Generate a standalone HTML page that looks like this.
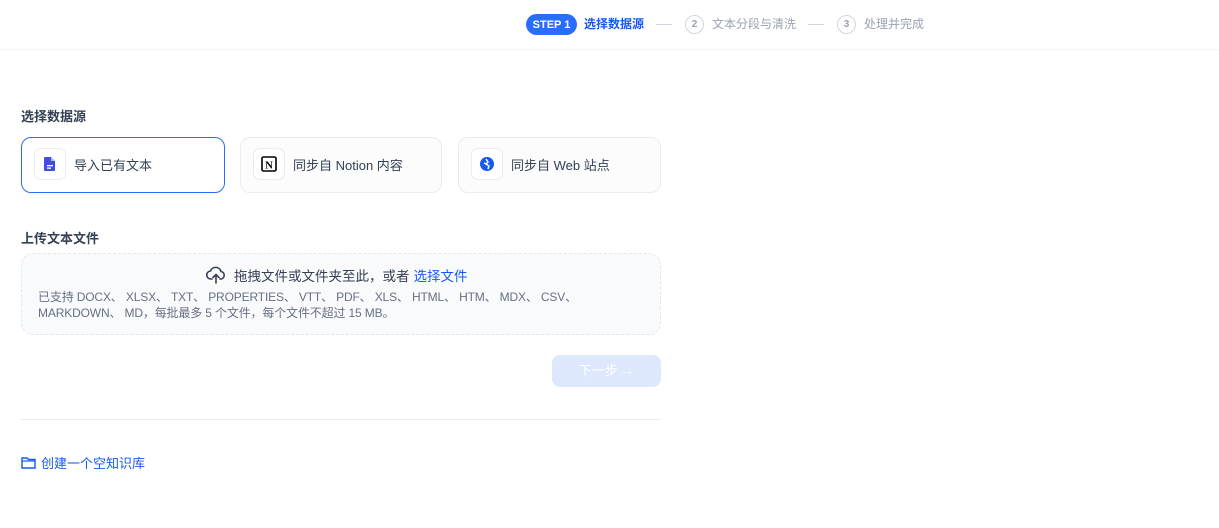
<!DOCTYPE html>
<html><head><meta charset="utf-8"><style>
*{box-sizing:border-box;margin:0;padding:0}
body{width:1219px;height:528px;background:#fff;font-family:"Liberation Sans","Noto Sans CJK SC",sans-serif;position:relative;overflow:hidden;color:#1d2939}
.hdr{position:absolute;left:0;top:0;width:1219px;height:50px;border-bottom:1px solid #f2f4f7}
.abs{position:absolute}
.pill{left:526px;top:14px;width:51px;height:21px;border-radius:11px;background:#296dff;color:#fff;font-size:11px;font-weight:bold;display:flex;align-items:center;justify-content:center}
.circ{width:19px;height:19px;border:1px solid #d0d5dd;border-radius:50%;color:#98a2b3;font-size:10px;font-weight:bold;display:flex;align-items:center;justify-content:center}
.line{height:1px;width:16px;background:#d0d5dd}
.st{font-size:12px;color:#98a2b3;line-height:20px}
.h{font-size:13px;font-weight:bold;color:#344054}
.card{top:137px;height:56px;border:1px solid #eaecf0;border-radius:10px;background:#fcfcfd;display:flex;align-items:center;padding-left:12px;font-size:13px;color:#344054;padding-bottom:2px}
.card.a{border:1.5px solid #296dff;background:#fff}
.ic{width:32px;height:32px;border:1px solid #eaecf0;border-radius:7px;background:#fff;margin-right:8px;display:flex;align-items:center;justify-content:center}
</style></head><body>
<div class="hdr"></div>
<div class="abs pill">STEP 1</div>
<div class="abs st" style="left:584px;top:14px;color:#155aef;font-weight:bold">选择数据源</div>
<div class="abs line" style="left:656px;top:24px"></div>
<div class="abs circ" style="left:685px;top:15px">2</div>
<div class="abs st" style="left:712px;top:14px">文本分段与清洗</div>
<div class="abs line" style="left:808px;top:24px"></div>
<div class="abs circ" style="left:837px;top:15px">3</div>
<div class="abs st" style="left:864px;top:14px">处理并完成</div>

<div class="abs h" style="left:21px;top:106px">选择数据源</div>
<div class="abs card a" style="left:21px;width:204px"><div class="ic"><svg width="14" height="16" viewBox="0 0 14 16"><path d="M2 1h6l4 4v9a1 1 0 0 1-1 1H2a1 1 0 0 1-1-1V2a1 1 0 0 1 1-1z" fill="#444ce7"/><path d="M8 1v4h4" fill="#a4bcfd"/><rect x="4" y="9" width="6" height="1.3" fill="#fff"/><rect x="4" y="11.5" width="4" height="1.3" fill="#fff"/></svg></div>导入已有文本</div>
<div class="abs card" style="left:240px;width:202px"><div class="ic"><svg width="18" height="18" viewBox="0 0 18 18"><rect x="2" y="2" width="14" height="14" rx="1.5" fill="#fff" stroke="#000" stroke-width="1.6"/><text x="9" y="13.5" font-size="11" font-family="Liberation Serif" font-weight="bold" text-anchor="middle">N</text></svg></div>同步自 Notion 内容</div>
<div class="abs card" style="left:458px;width:203px"><div class="ic"><svg width="16" height="16" viewBox="0 0 16 16"><circle cx="8" cy="8" r="7" fill="#155aef"/><path d="M7 3l2 3-2 2 3 2-1 3M5 7l2 1" stroke="#fff" stroke-width="1.5" fill="none"/></svg></div>同步自 Web 站点</div>

<div class="abs h" style="left:21px;top:228px">上传文本文件</div>
<div class="abs" style="left:21px;top:253px;width:640px;height:82px;border:1px dashed #e4e7ec;border-radius:12px;background:#f9fafb"></div>
<div class="abs" style="left:206px;top:265px;font-size:13.5px;color:#344054;display:flex;align-items:center"><svg width="20" height="18" viewBox="0 0 20 18" style="margin-right:8px"><path d="M6 13H5a4 4 0 0 1-.5-8A5.5 5.5 0 0 1 15 5.5a3.8 3.8 0 0 1 0 7.5h-1" fill="none" stroke="#344054" stroke-width="1.6" stroke-linecap="round"/><path d="M10 17V9M7 11.5l3-3 3 3" fill="none" stroke="#344054" stroke-width="1.6" stroke-linecap="round"/></svg>拖拽文件或文件夹至此，或者 <span style="color:#155aef;margin-left:4px">选择文件</span></div>
<div class="abs" style="left:38px;top:289px;width:610px;font-size:12px;color:#667085;line-height:16px;letter-spacing:-0.15px">已支持 DOCX、 XLSX、 TXT、 PROPERTIES、 VTT、 PDF、 XLS、 HTML、 HTM、 MDX、 CSV、<br>MARKDOWN、 MD，每批最多 5 个文件，每个文件不超过 15 MB。</div>

<div class="abs" style="left:552px;top:355px;width:109px;height:32px;border-radius:8px;background:#dde8fd;color:#fff;font-size:13px;text-align:center;line-height:32px">下一步 →</div>
<div class="abs" style="left:21px;top:419px;width:640px;height:1px;background:#eaecf0"></div>
<div class="abs" style="left:21px;top:453px;font-size:13px;color:#155aef;display:flex;align-items:center"><svg width="15" height="13" viewBox="0 0 15 13" style="margin-right:5px"><path d="M1 2h5l1.5 1.5H14V12H1z" fill="none" stroke="#155aef" stroke-width="1.4"/><path d="M1 5h13" stroke="#155aef" stroke-width="1.2"/></svg>创建一个空知识库</div>
</body></html>
